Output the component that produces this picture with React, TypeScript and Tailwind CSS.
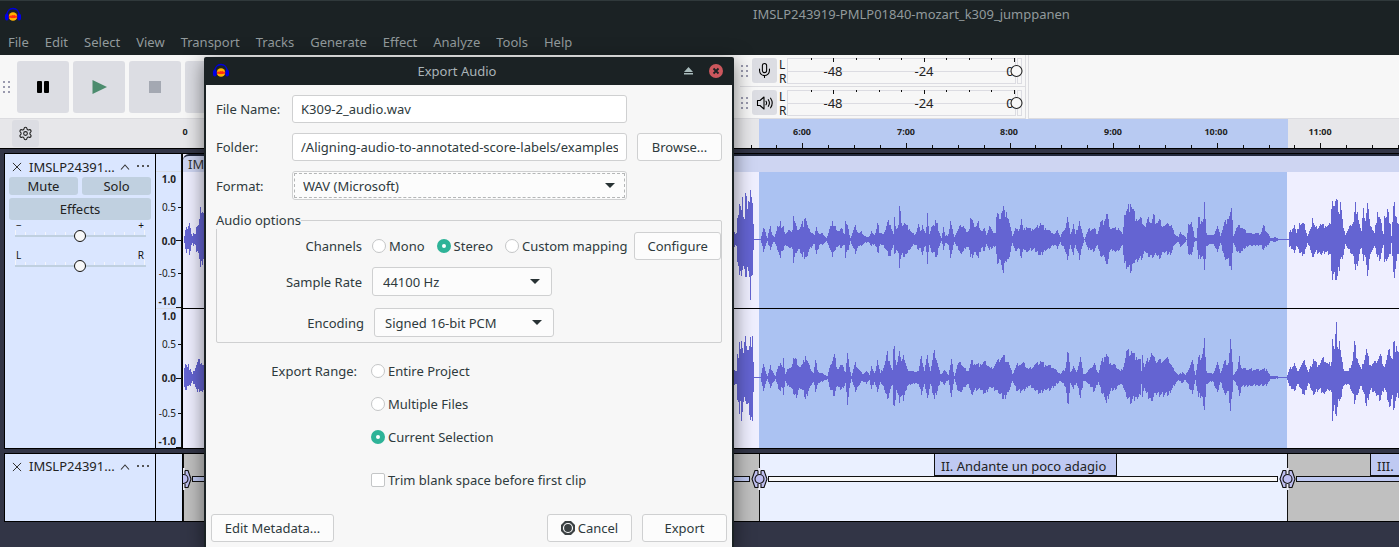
import React from "react";
import { Mic, Settings } from "lucide-react";

const FONT = "font-['Noto_Sans','Liberation_Sans',sans-serif]";

/* Envelope points: x, peak above the centre line, peak below it (defaults to the peak above). */
const WAVE_LEFT =
  "184 3,185 9,186 12 14,188 13 9,189 16 16,190 11,191 5,192 3,193 6,195 5,196 12,198 14,199 20,200 32 28,201 26 22,202 27 26,203 26 20,204 18,205 14,207 0,730 0,733 6,734 7,735 5,736 6,737 21 23,738 24 27,739 35 36,740 33 32,741 29 37,742 42 31,743 22 27,744 20 30,745 46 39,746 43 39,747 30 28,748 38 32,749 37 39,750 49 62,751 42 37,752 36,753 15 10,754 0,760 0,761 3,763 11 12,765 7 6,767 1,768 6 5,770 13 10,772 4,774 2,776 8 6,777 13 10,778 12,780 18 19,781 11,783 13 10,785 5,788 9 7,790 8,792 9,793 23 24,794 18,796 13 14,798 9,801 15,802 18,803 12,804 20,805 21 18,806 18,808 11 12,812 6,814 4,816 12 15,819 5,822 6 5,825 2,826 1,828 6 5,830 13 10,832 18,833 13,835 13 10,838 8 6,841 11 8,844 5,845 18 19,847 14 10,848 10,850 1,852 6,855 14 15,858 6,861 8 6,864 3,868 2,871 8 6,874 4,877 16 12,878 14,879 6,882 5,885 9,888 19 17,890 14 17,892 8,893 5,894 22 15,896 10,898 14,899 33 29,900 28 20,901 16,904 16 18,906 14 15,909 10,912 6,915 5,918 15 10,920 8,922 14 16,925 6,926 12,927 26 25,928 13,929 5,931 12,934 13,935 19 18,937 16,938 8,941 1,943 12 10,945 3,948 5,950 18 19,952 10,954 2,956 6,960 14,963 13 11,966 7,969 10,970 21 18,973 16,975 12,978 18 19,981 8,984 11,986 4,989 13 10,992 8,995 6,996 22 15,997 26 25,999 20,1001 26,1003 33 34,1005 22,1006 27 23,1008 20,1010 12,1012 3,1015 11,1018 8,1021 20 19,1023 9,1026 12,1032 10,1036 12,1040 16,1045 11,1050 8,1054 5,1057 9,1060 2,1061 5,1064 9,1067 22 21,1070 5,1073 15 16,1075 5,1079 18 21,1082 6,1084 0,1088 10,1094 11,1097 5,1100 17,1104 18,1106 25,1107 25,1109 12,1114 11,1118 11,1122 5,1124 24,1127 30 28,1130 35 34,1131 32,1133 30 24,1136 20,1141 21,1145 12,1148 22 18,1151 16,1153 25 18,1156 16,1159 20,1163 13,1168 15,1171 14,1174 5,1178 2,1180 7,1184 3,1186 0,1188 15,1191 17 16,1194 2,1196 1,1198 22 20,1201 18,1203 20,1204 37 31,1205 20,1206 6,1210 4,1213 4,1217 13 12,1220 3,1224 17 18,1227 20,1230 27,1231 31 31,1233 3,1236 11,1239 14,1242 11,1248 6,1255 6,1260 5,1263 14 10,1268 5,1270 1,1275 2,1278 0,1288 0,1289 7,1292 10 9,1294 14,1296 6,1299 16 14,1304 15,1307 3,1310 10,1312 21 18,1315 12,1320 15,1325 13,1330 15,1331 30 32,1332 38 42,1334 33,1336 40 42,1337 39 37,1339 25 32,1340 37 20,1342 20,1345 4,1350 14,1353 17,1355 37 31,1357 27,1359 15,1361 8,1363 31 22,1365 18,1367 36 37,1369 20,1371 12,1374 6,1377 27 18,1380 20,1383 5,1384 23,1386 22,1387 30 20,1390 15,1391 3,1393 33,1394 37 40,1396 22,1398 15,1399 28 20";

const WAVE_RIGHT =
  "184 9,185 13,186 12,188 13 8,189 7,190 8,191 5,192 3,193 6,195 9,197 15,199 18 15,201 14,203 12,205 10,207 0,730 0,734 7,736 6,737 23,738 19 25,739 35 37,740 28 24,741 36 45,743 24 25,745 41 24,746 31 27,747 27,749 31 39,750 40 44,751 30 41,752 41 45,753 15,754 0,760 0,763 13 14,765 6,767 1,770 12 10,773 4,775 1,778 11,780 14,782 10,783 19 18,785 3,787 8,790 9,793 19 17,796 18 21,799 10,802 13,805 21 22,808 14,810 8,813 4,815 17 15,818 5,822 4,827 1,830 12,834 23 19,837 8,840 12,843 10,845 5,847 24 28,849 10,851 1,855 15,858 8,862 3,866 6,869 2,871 11,874 4,877 17 15,880 4,884 12,887 26 22,889 16,892 7,893 28,894 31 29,896 12,899 26,900 20,903 22 24,905 14,907 8,912 6,918 6,921 21 18,924 6,927 22 21,930 6,934 27 22,937 14,940 3,944 7,948 2,951 18 20,954 1,957 12,960 15,964 9,968 6,971 17,974 13,980 13,985 16,990 9,995 13,998 18 16,1003 22,1008 15,1012 3,1017 14,1024 14,1028 8,1034 12,1040 16,1045 12,1050 12,1055 8,1060 3,1065 9,1067 25 26,1068 24 27,1070 5,1073 11,1076 5,1080 20 21,1083 3,1086 4,1090 9,1094 14,1098 4,1101 16,1104 20,1106 23 26,1110 14,1115 12,1120 6,1123 10,1126 26 20,1131 26,1136 20,1140 18,1141 6,1142 22 20,1144 10,1146 16,1151 24,1155 16,1160 18,1168 18,1172 10,1178 2,1182 5,1185 2,1192 17,1195 2,1198 20,1202 23 20,1204 39 33,1205 20,1206 6,1212 3,1217 15,1220 4,1224 16,1228 14,1230 38 34,1232 15,1233 2,1237 8,1239 21 19,1241 9,1250 8,1258 8,1266 8,1270 1,1286 0,1289 8,1294 14,1297 6,1304 17 18,1308 5,1313 18,1318 12,1323 20 16,1328 13,1331 15,1332 38 45,1334 28,1336 55 40,1337 30,1339 36 24,1341 20,1343 8,1348 6,1352 16,1354 36 27,1357 18,1361 8,1366 28 29,1370 12,1375 16,1380 23,1384 10,1389 28 30,1392 18,1393 35 33,1396 31 20,1399 25 20";

const CANVAS_X = 183;

function wavePath(data: string, centre: number): string {
  const pts = data.split(",").map((p) => {
    const [x, up, down] = p.split(" ").map(Number);
    return { x, up, down: down ?? up };
  });
  let d = "";
  for (let i = 0; i < pts.length - 1; i++) {
    const a = pts[i];
    const b = pts[i + 1];
    for (let x = a.x; x < b.x; x++) {
      const t = (x - a.x) / (b.x - a.x);
      const noise = x === a.x ? 1 : 0.78 + (((x * 7919 + 31) % 13) / 13) * 0.34;
      const noiseDown = x === a.x ? 0.96 : 0.76 + (((x * 4507 + 11) % 11) / 11) * 0.34;
      const up = Math.round((a.up + (b.up - a.up) * t) * noise);
      const down = Math.round((a.down + (b.down - a.down) * t) * noiseDown);
      d += `M${x - CANVAS_X} ${centre - up}h1v${up + down + 1}h-1z`;
    }
  }
  return d;
}

const PATH_LEFT = wavePath(WAVE_LEFT, 85);
const PATH_RIGHT = wavePath(WAVE_RIGHT, 223);

function AudacityLogo() {
  return (
    <svg width="18" height="16" viewBox="0 0 18 16" aria-hidden="true">
      <path d="M3 9C2.500 4 5.500 1.500 9 1.500S15.500 4 15 9" fill="none" stroke="#0000d8" strokeWidth="1.300" />
      <circle cx="9" cy="9.500" r="4.300" fill="#ffb400" />
      <path d="M4.800 9.700l1.200-.8 1 .5 1-1 1 .8 1.200-.8 1 .8 1-.3 1 .8-1 .7-1.200-.3-1 .8-1-.6-1 .6-1.200-.7-1 .4z" fill="#ff2a10" stroke="#ff2a10" strokeWidth="1" />
      <ellipse cx="2.800" cy="10" rx="1.900" ry="3.600" fill="#0000e6" />
      <ellipse cx="15.200" cy="10" rx="1.900" ry="3.600" fill="#0000e6" />
    </svg>
  );
}

function Grip() {
  return (
    <svg width="8" height="14" viewBox="0 0 8 14" className="shrink-0" fill="#9a9aae" aria-hidden="true">
      {[1, 6, 11].map((y) => (
        <g key={y}>
          <rect x="0" y={y} width="2" height="2" />
          <rect x="5" y={y} width="2" height="2" />
        </g>
      ))}
    </svg>
  );
}

const MENUS = ["File", "Edit", "Select", "View", "Transport", "Tracks", "Generate", "Effect", "Analyze", "Tools", "Help"];

function Header() {
  return (
    <header className="border-t border-[#30393b] bg-[#1b2224] text-[#929a9c]">
      <div className="flex h-[27px] items-center pl-1">
        <AudacityLogo />
        <h1 className="ml-[731px] whitespace-nowrap text-[13px]">IMSLP243919-PMLP01840-mozart_k309_jumppanen</h1>
      </div>
      <nav className="flex h-[27px] items-center gap-4 pl-2 pt-[2px] text-[13px]">
        {MENUS.map((m) => (
          <button key={m} type="button">{m}</button>
        ))}
      </nav>
    </header>
  );
}

function TransportButton({ label, children }: { label: string; children?: React.ReactNode }) {
  return (
    <button type="button" aria-label={label} className="flex size-[52px] shrink-0 items-center justify-center rounded-[3px] bg-[#dcdde3]">
      {children}
    </button>
  );
}

const METER_TICKS = [24, 46, 69, 92, 114, 137, 159, 182, 204, 227];

function Meter({ label, icon }: { label: string; icon: React.ReactNode }) {
  return (
    <div className="flex h-8 items-center border-b border-[#dcdce0] pl-px">
      <Grip />
      <button type="button" aria-label={label} className="ml-[3px] flex size-[25px] items-center justify-center rounded-[3px] bg-[#dcdde3] text-black">
        {icon}
      </button>
      <div className="ml-[2px] w-2 pt-[2px] text-[12px] leading-[14px] text-[#222]">
        <div>L</div>
        <div>R</div>
      </div>
      <svg width="236" height="28" viewBox="0 0 236 28" className="font-['Noto_Sans',sans-serif]" shapeRendering="crispEdges">
        <path d="M.5 1.500h228v25H.5zM230.500 1.500h4v25h-4zM0 14.500h235" fill="none" stroke="#dcdce2" />
        {METER_TICKS.map((x, i) => (
          <rect key={x} x={x} y="1" width="1" height={i === 1 || i === 5 || i === 9 ? 4 : 2} fill="#111" />
        ))}
        <g fontSize="13" fill="#222" textAnchor="middle">
          <text x="46" y="19">-48</text>
          <text x="137" y="19">-24</text>
          <text x="223" y="19">0</text>
        </g>
        <circle cx="229.500" cy="14" r="5.500" fill="#f8f8f8" stroke="#222" strokeWidth="1.100" shapeRendering="geometricPrecision" />
      </svg>
    </div>
  );
}

function Toolbars() {
  return (
    <div className="flex h-16 bg-[#f7f7f7]">
      <div className="flex w-[740px] shrink-0 items-center gap-1 border-b border-[#dcdce0] pl-[3px]">
        <div className="mr-[2px]"><Grip /></div>
        <TransportButton label="Pause">
          <svg width="12" height="12"><rect width="5" height="12" rx="1" /><rect x="7" width="5" height="12" rx="1" /></svg>
        </TransportButton>
        <TransportButton label="Play">
          <svg width="15" height="14"><path d="M.500 0L15 7 .500 14z" fill="#4c8c6e" /></svg>
        </TransportButton>
        <TransportButton label="Stop">
          <svg width="12" height="12"><rect width="12" height="12" fill="#a4a8b2" /></svg>
        </TransportButton>
        <TransportButton label="Skip to start" />
      </div>
      <div className="w-[286px] shrink-0 border-r border-[#dcdce0]">
        <Meter label="Record meter" icon={<Mic size={17} strokeWidth={1.5} />} />
        <Meter
          label="Playback meter"
          icon={
            <svg width="18" height="16" viewBox="0 0 18 16" fill="none" stroke="currentColor" strokeWidth="1.100" strokeLinejoin="round" strokeLinecap="round">
              <path d="M1.500 5.500h2.500L8 2v12l-4-3.500H1.500zM10 6.200q1.200 1.800 0 3.600M12.300 4.700q2.200 3.300 0 6.600M14.600 3.200q3.200 4.800 0 9.600" />
            </svg>
          }
        />
      </div>
      <div className="ml-[2px] grow border-b border-l border-[#dcdce0]" />
    </div>
  );
}

function Ruler() {
  const ticks = Array.from({ length: 26 }, (_, i) => i);
  return (
    <div className="flex h-[29px] items-center overflow-hidden bg-[#e7e7ea]">
      <button type="button" aria-label="Timeline options" className="ml-3 flex h-[27px] w-[27px] shrink-0 items-center justify-center rounded-[3px] bg-[#dcdde3] text-[#222]">
        <Settings size={15} strokeWidth={1.7} />
      </button>
      <svg width="1360" height="29" viewBox="39 0 1360 29" className="shrink-0" shapeRendering="crispEdges">
        <rect x="759" width="529" height="29" fill="#b8caf2" />
        {ticks.map((i) => (
          <rect key={i} x={Math.round(750.5 + i * 25.9)} y={i % 4 === 2 ? 24 : 26} width="1" height={i % 4 === 2 ? 5 : 3} fill="#111" />
        ))}
        <g className="text-[9px] font-bold" fill="#222" textAnchor="middle">
          <text x="185" y="16">0</text>
          {[6, 7, 8, 9, 10, 11].map((m) => (
            <text key={m} x={Math.round(802 + (m - 6) * 103.6)} y="16">{`${m}:00`}</text>
          ))}
        </g>
      </svg>
    </div>
  );
}

function TrackTitle() {
  return (
    <div className="flex h-[21px] items-center pl-[7px] text-[#222]">
      <button type="button" aria-label="Close track">
        <svg width="10" height="10" viewBox="0 0 11 11" stroke="#333" strokeWidth="1.100"><path d="M1 1l9 9M10 1L1 10" /></svg>
      </button>
      <span className="ml-[7px] whitespace-nowrap text-[13px]">IMSLP24391...</span>
      <svg width="10" height="6" viewBox="0 0 10 6" className="ml-auto" fill="none" stroke="#333" strokeWidth="1.100"><path d="M1 5.500L5 1l4 4.500" /></svg>
      <button type="button" aria-label="Track menu" className="ml-[7px] mr-[5px]">
        <svg width="13" height="3" fill="#555"><rect x="0" y="0" width="2" height="2" /><rect x="5" y="0" width="2" height="2" /><rect x="10" y="0" width="2" height="2" /></svg>
      </button>
    </div>
  );
}

function TrackSlider({ label, low, high }: { label: string; low: string; high: string }) {
  return (
    <label className="block h-[30px] px-[9px]">
      <span className="flex h-[10px] items-center justify-between px-[2px] text-[10px] leading-[10px] text-[#111]">
        <span>{low}</span>
        <span>{high}</span>
      </span>
      <span className="relative block h-3">
        <svg width="131" height="9" className="absolute left-px top-0" shapeRendering="crispEdges">
          <rect y="5" width="131" height="2" fill="#c0d0e0" />
          {Array.from({ length: 14 }, (_, i) => (
            <rect key={i} x={Math.round(i * 9.9)} y={i === 0 || i === 13 ? 0 : 2} width="1" height={i === 0 || i === 13 ? 5 : 3} fill="#f2f4fa" />
          ))}
        </svg>
        <input
          type="range"
          aria-label={label}
          defaultValue={50}
          className="absolute left-0 top-0 h-3 w-[131px] appearance-none bg-transparent [&::-webkit-slider-thumb]:size-3 [&::-webkit-slider-thumb]:appearance-none [&::-webkit-slider-thumb]:rounded-full [&::-webkit-slider-thumb]:border [&::-webkit-slider-thumb]:border-[#111] [&::-webkit-slider-thumb]:bg-[#f8f8f8]"
        />
      </span>
    </label>
  );
}

const SCALE: [string, number, number][] = [
  ["1.0", 29, 0], ["0.5", 57, 53], ["0.0", 91, 86], ["-0.5", 123, 119], ["-1.0", 151, 153],
  ["1.0", 166, 0], ["0.5", 194, 190], ["0.0", 228, 224], ["-0.5", 263, 259], ["-1.0", 291, 293],
];

function VerticalScale() {
  return (
    <svg width="26" height="294" viewBox="0 0 26 294" className="box-content shrink-0 border-x border-black bg-[#dae6ff]" shapeRendering="crispEdges">
      <path d="M0 17.500h26M0 154.500h26" stroke="#d8dce6" />
      <path d="M25.500 0v294" stroke="#111" />
      {SCALE.map(([t, y, tick], i) => (
        <g key={i}>
          <text x="20" y={y} textAnchor="end" fontSize="10" fill="#222" fontWeight={t.endsWith("5") ? 400 : 700}>{t}</text>
          {tick > 0 && <rect x={t.endsWith("5") ? 22 : 20} y={tick} width="6" height="1" fill="#111" />}
        </g>
      ))}
    </svg>
  );
}

function AudioTrack() {
  return (
    <section className="ml-1 flex h-[296px] overflow-hidden border border-r-0 border-black">
      <div className="w-[150px] shrink-0 bg-[#dae6ff] text-[13px] leading-4 text-[#222]">
        <div className="pt-[2px]"><TrackTitle /></div>
        <div className="grid grid-cols-2 gap-x-1 gap-y-[3px] px-1 text-[13px]">
          <button type="button" className="flex h-[18px] items-center justify-center rounded-[3px] bg-[#c0d0e0]">Mute</button>
          <button type="button" className="flex h-[18px] items-center justify-center rounded-[3px] bg-[#c0d0e0]">Solo</button>
          <button type="button" className="col-span-2 flex h-[22px] items-center justify-center rounded-[3px] bg-[#c0d0e0]">Effects</button>
        </div>
        <TrackSlider label="Gain" low="−" high="+" />
        <TrackSlider label="Pan" low="L" high="R" />
      </div>
      <VerticalScale />
      <div className="relative min-w-0 grow overflow-hidden bg-[#efefff]">
        <div className="h-[18px] overflow-hidden whitespace-nowrap rounded-tl-md border-t-2 border-[#22283c] bg-[#ced5f2] pl-[5px] text-[13px] leading-4 text-[#333]">IM</div>
        <svg width="1216" height="294" viewBox="0 0 1216 294" className="absolute left-0 top-0" shapeRendering="crispEdges">
          <rect x="576" y="18" width="528" height="276" fill="#abc2f2" />
          <path d={PATH_LEFT} fill="#6464d2" />
          <path d={PATH_RIGHT} fill="#6464d2" />
          <path d="M0 154.500h1216" stroke="#000" />
        </svg>
      </div>
    </section>
  );
}

function LabelHandle({ x }: { x: number }) {
  return (
    <g transform={`translate(${x} 25)`}>
      <path d="M.5-11v22" stroke="#e8e8f4" strokeWidth="3" />
      <path d="M-1-8.500h-3L-7 0l3 8.500h3V5M-1-8.500V-5M2-8.500h3L8 0 5 8.500H2V5M2-8.500V-5" fill="#bfbff0" stroke="#111" strokeWidth="1.100" />
      <circle cx=".5" r="4.500" fill="#bfbff2" stroke="#111" strokeWidth="1.100" />
    </g>
  );
}

function LabelTrack() {
  return (
    <section className="ml-1 mt-1 flex h-[69px] overflow-hidden border border-r-0 border-black">
      <div className="w-[150px] shrink-0 bg-[#dae6ff] pt-[2px]"><TrackTitle /></div>
      <div className="w-7 shrink-0 border-x border-black bg-[#dae6ff]" />
      <div className="relative min-w-0 grow overflow-hidden bg-[#c0c0c0]">
        <svg width="1216" height="67" viewBox="0 0 1216 67" className="absolute left-0 top-0">
          <g shapeRendering="crispEdges">
            <rect x="577" width="528" height="67" fill="#eaf0ff" />
            <path d="M.5 0v67M576.500 0v67M1104.500 0v67" stroke="#111" />
            <path d="M9.500 22.500h557v5H9.500zM1113.500 22.500h110v5h-110z" fill="#bfc9f2" stroke="#111" />
            <path d="M585.500 22.500h509v5h-509z" fill="#f8f8f8" stroke="#111" />
          </g>
          <LabelHandle x={0} />
          <LabelHandle x={576} />
          <LabelHandle x={1104} />
        </svg>
        <div className="absolute left-[751px] top-0 h-[22px] whitespace-nowrap border border-t-0 border-[#111] bg-[#bfc9f2] pl-[6px] pr-[10px] text-[13px] leading-[24px] text-[#222]">II. Andante un poco adagio</div>
        <div className="absolute left-[1187px] right-0 top-0 h-[22px] whitespace-nowrap border border-r-0 border-t-0 border-[#111] bg-[#bfc9f2] pl-[6px] text-[13px] leading-[24px] text-[#222]">III.</div>
      </div>
    </section>
  );
}

const BTN = "flex h-7 items-center justify-center rounded-[3px] border border-[#cfd0d1] bg-[#fcfcfc]";
const FIELD = "h-7 w-[335px] rounded-[3px] border border-[#cfd0d1] bg-white px-2";

function Radio({ name, label, checked }: { name: string; label: string; checked?: boolean }) {
  return (
    <label className="flex items-center gap-[3px] whitespace-nowrap">
      <input
        type="radio"
        name={name}
        defaultChecked={checked}
        className="size-[14px] shrink-0 appearance-none rounded-full border border-[#c4c6c7] bg-white checked:border-[5px] checked:border-[#2eb398]"
      />
      {label}
    </label>
  );
}

function Select({ id, value, kind }: { id: string; value: string; kind: "wide" | "narrow" }) {
  return (
    <div className={kind === "wide" ? "relative w-[335px]" : "relative w-[180px]"}>
      <select
        id={id}
        className={
          kind === "wide"
            ? "h-[29px] w-full appearance-none rounded-[3px] border border-[#cfd0d1] bg-[#fcfcfc] px-[10px] outline outline-1 outline-dashed -outline-offset-3 outline-[#b4b6b7]"
            : "h-[29px] w-full appearance-none rounded-[3px] border border-[#cfd0d1] bg-[#fcfcfc] px-[10px]"
        }
      >
        <option>{value}</option>
      </select>
      <svg width="10" height="5" className="pointer-events-none absolute right-3 top-3"><path d="M0 0h10L5 5z" fill="#283234" /></svg>
    </div>
  );
}

function ExportDialog() {
  return (
    <div role="dialog" aria-label="Export Audio" className="absolute left-[204px] top-[57px] w-[530px] rounded-t-[2px] border-x-2 border-[#1b2224] bg-[#f7f7f7] text-[13px] leading-[18px] text-[#2e3a3d] shadow-[0_4px_20px_rgba(0,0,0,0.5)]">
      <div className="flex h-7 items-center bg-[#1b2224] px-[6px] text-[#aab4b8]">
        <AudacityLogo />
        <h2 className="grow text-center">Export Audio</h2>
        <button type="button" aria-label="Shade" className="mr-4">
          <svg width="9" height="8" fill="#a9bcbc"><path d="M4.500 0L9 5H0zM0 6h9v1.500H0z" /></svg>
        </button>
        <button type="button" aria-label="Close" className="mr-[3px]">
          <svg width="14" height="14"><circle cx="7" cy="7" r="7" fill="#cc575d" /><path d="M4.500 4.500l5 5M9.500 4.500l-5 5" stroke="#1b2224" strokeWidth="1.800" /></svg>
        </button>
      </div>

      <form className="px-[10px] pb-2 pt-[10px]">
        <div className="grid grid-cols-[66px_335px_85px] items-center gap-[10px]">
          <label htmlFor="file-name">File Name:</label>
          <input id="file-name" type="text" defaultValue="K309-2_audio.wav" className={FIELD} />
          <span />
          <label htmlFor="folder">Folder:</label>
          <input id="folder" type="text" defaultValue="/Aligning-audio-to-annotated-score-labels/examples" className={FIELD} />
          <button type="button" className={BTN}>Browse...</button>
          <label htmlFor="format">Format:</label>
          <Select id="format" value="WAV (Microsoft)" kind="wide" />
        </div>

        <fieldset className="mt-[11px] h-[132px] rounded-[2px] border border-[#cfd0d1]">
          <legend className="-ml-px bg-[#f7f7f7]">Audio options</legend>
          <div className="mt-[3px] flex items-center gap-[10px]">
            <span className="w-[145px] text-right">Channels</span>
            <div className="flex grow items-center gap-3">
              <Radio name="channels" label="Mono" />
              <Radio name="channels" label="Stereo" checked />
              <Radio name="channels" label="Custom mapping" />
              <button type="button" className={`${BTN} -ml-[5px] grow`}>Configure</button>
            </div>
          </div>
          <div className="mt-[7px] flex items-center gap-[10px]">
            <label htmlFor="rate" className="w-[145px] text-right">Sample Rate</label>
            <Select id="rate" value="44100 Hz" kind="narrow" />
          </div>
          <div className="mt-3 flex items-center gap-[10px]">
            <label htmlFor="encoding" className="w-[147px] text-right">Encoding</label>
            <Select id="encoding" value="Signed 16-bit PCM" kind="narrow" />
          </div>
        </fieldset>

        <div className="mt-[19px] flex gap-[14px]">
          <span className="w-[141px] text-right">Export Range:</span>
          <div className="flex flex-col gap-[15px]">
            <Radio name="range" label="Entire Project" />
            <Radio name="range" label="Multiple Files" />
            <Radio name="range" label="Current Selection" checked />
            <label className="mt-[10px] flex items-center gap-[3px]">
              <input type="checkbox" className="size-[14px] appearance-none rounded-[2px] border border-[#c4c6c7] bg-white" />
              Trim blank space before first clip
            </label>
          </div>
        </div>

        <div className="-mx-[5px] mt-[25px] flex gap-[10px]">
          <button type="button" className={`${BTN} mr-auto w-[123px]`}>Edit Metadata...</button>
          <button type="button" className={`${BTN} w-[85px] gap-[3px]`}>
            <svg width="14" height="14"><path d="M4 0h6l4 4v6l-4 4H4l-4-4V4z" fill="#3b4143" /><circle cx="7" cy="7" r="4.500" fill="#3b4143" stroke="#fcfcfc" strokeWidth="1.200" /></svg>
            Cancel
          </button>
          <button type="button" className={`${BTN} w-[85px]`}>Export</button>
        </div>
      </form>
    </div>
  );
}

export default function App() {
  return (
    <div className={`relative h-screen overflow-hidden bg-[#323546] ${FONT}`}>
      <Header />
      <Toolbars />
      <Ruler />
      <main className="border-t border-black pt-1">
        <AudioTrack />
        <LabelTrack />
      </main>
      <ExportDialog />
    </div>
  );
}
